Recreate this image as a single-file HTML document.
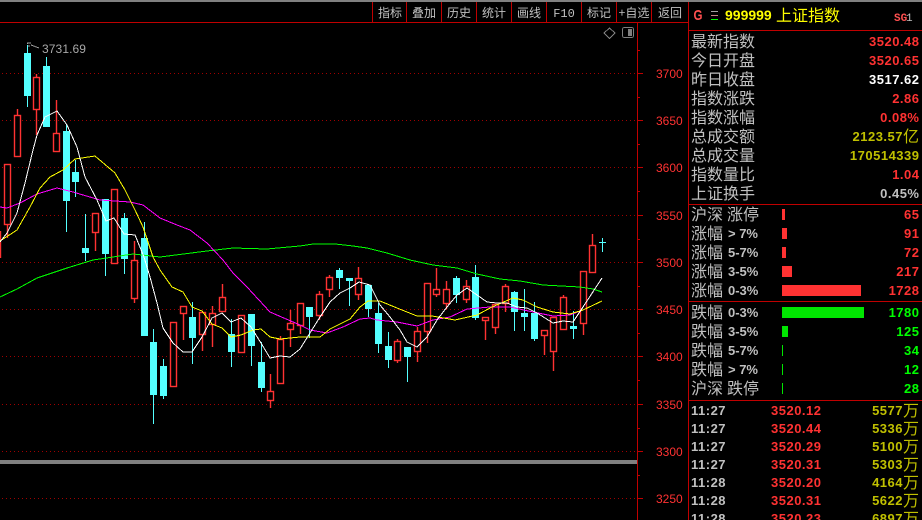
<!DOCTYPE html>
<html><head><meta charset="utf-8"><style>
html,body{margin:0;padding:0;background:#000;width:922px;height:520px;overflow:hidden}
svg{display:block}
text{white-space:pre}
.c{font-family:"WenQuanYi Zen Hei","Noto Sans CJK SC",sans-serif;font-size:16px;fill:#c0c0c0}
.t{font-family:"WenQuanYi Zen Hei","Noto Sans CJK SC",sans-serif;font-size:12px;fill:#c0c0c0;text-anchor:middle}
.n{font-family:"Liberation Sans",sans-serif;font-weight:bold;font-size:13px;letter-spacing:.5px;text-anchor:end}
.l{font-family:"Liberation Sans",sans-serif;font-weight:bold;font-size:13px;fill:#c0c0c0}
.a{font-family:"Liberation Sans",sans-serif;font-size:12px;fill:#ff3232}
.r{fill:#ff3232}.w{fill:#fff}.y{fill:#c0c000}.g{fill:#00ff00}.s{fill:#c0c0c0}
</style></head><body>
<svg width="922" height="520" viewBox="0 0 922 520" xmlns="http://www.w3.org/2000/svg">
<rect width="922" height="520" fill="#000"/>
<g shape-rendering="crispEdges">
<rect x="0" y="0" width="922" height="2" fill="#808080"/>
<path d="M0 22.5H689M372.5 2V22M406.5 2V22M441.5 2V22M476.5 2V22M511.5 2V22M546.5 2V22M581.5 2V22M616.5 2V22M651.5 2V22M637.5 22V520M688.5 2V520M689 30.5H922M689 204.5H922M689 301.5H922M689 400.5H922" stroke="#c00000" fill="none"/>
<path d="M2 73.5H637M2 120.5H637M2 167.5H637M2 215.5H637M2 262.5H637M2 309.5H637M2 356.5H637M2 404.5H637M2 451.5H637M2 498.5H637" stroke="#a00000" stroke-dasharray="1 3" fill="none"/>
<path d="M638 73.5h5M638 120.5h5M638 167.5h5M638 215.5h5M638 262.5h5M638 309.5h5M638 356.5h5M638 404.5h5M638 451.5h5M638 498.5h5M638 50.5h2M638 97.5h2M638 144.5h2M638 191.5h2M638 239.5h2M638 286.5h2M638 333.5h2M638 380.5h2M638 428.5h2M638 475.5h2" stroke="#c00000" fill="none"/>
<rect x="0" y="460" width="637" height="4" fill="#808080"/>
<!-- red candles -->
<g stroke="#ff3232" fill="#000" stroke-width="1.4" shape-rendering="geometricPrecision">
<path fill="none" d="M0.5 231V258M7.5 224V238M17.5 109V115M36.5 74V77M36.5 109V135M56.5 100V133M95.5 232V251M134.5 241V260M134.5 298V303M183.5 313V340M202.5 334V351M212.5 306V313M212.5 324V347M222.5 284V297M270.5 374V391M270.5 400V408M280.5 336V339M290.5 310V323M290.5 329V347M300.5 325V334M319.5 291V294M319.5 315V320M329.5 275V277M329.5 289V297M358.5 267V278M358.5 294V300M397.5 339V341M397.5 360V363M417.5 327V331M417.5 351V362M427.5 331V343M436.5 268V289M436.5 294V297M446.5 281V289M446.5 303V309M466.5 280V286M466.5 299V303M485.5 320V340M495.5 327V334M505.5 284V286M505.5 303V312M544.5 335V355M553.5 351V371M563.5 295V297M583.5 323V335M592.5 234V245"/>
<rect x="4.5" y="164.5" width="6" height="60"/>
<rect x="14.5" y="115.5" width="6" height="41"/>
<rect x="33.5" y="77.5" width="6" height="32"/>
<rect x="53.5" y="133.5" width="6" height="18"/>
<rect x="92.5" y="213.5" width="6" height="19"/>
<rect x="111.5" y="189.5" width="6" height="74"/>
<rect x="131.5" y="260.5" width="6" height="38"/>
<rect x="170.5" y="322.5" width="6" height="64"/>
<rect x="180.5" y="306.5" width="6" height="7"/>
<rect x="199.5" y="312.5" width="6" height="22"/>
<rect x="209.5" y="313.5" width="6" height="11"/>
<rect x="219.5" y="297.5" width="6" height="14"/>
<rect x="238.5" y="315.5" width="6" height="37"/>
<rect x="267.5" y="391.5" width="6" height="9"/>
<rect x="277.5" y="339.5" width="6" height="44"/>
<rect x="287.5" y="323.5" width="6" height="6"/>
<rect x="297.5" y="303.5" width="6" height="22"/>
<rect x="316.5" y="294.5" width="6" height="21"/>
<rect x="326.5" y="277.5" width="6" height="12"/>
<rect x="355.5" y="278.5" width="6" height="16"/>
<rect x="394.5" y="341.5" width="6" height="19"/>
<rect x="414.5" y="331.5" width="6" height="20"/>
<rect x="424.5" y="283.5" width="6" height="48"/>
<rect x="433.5" y="289.5" width="6" height="5"/>
<rect x="443.5" y="289.5" width="6" height="14"/>
<rect x="463.5" y="286.5" width="6" height="13"/>
<rect x="482.5" y="317.5" width="6" height="3"/>
<rect x="492.5" y="304.5" width="6" height="23"/>
<rect x="502.5" y="286.5" width="6" height="17"/>
<rect x="541.5" y="330.5" width="6" height="5"/>
<rect x="550.5" y="317.5" width="6" height="34"/>
<rect x="560.5" y="297.5" width="6" height="32"/>
<rect x="580.5" y="271.5" width="6" height="52"/>
<rect x="589.5" y="245.5" width="6" height="27"/>
</g>
<!-- cyan candles -->
<g shape-rendering="crispEdges">
<path stroke="#54ffff" fill="none" d="M27.5 45V107M46.5 57V127M66.5 124V232M75.5 160V197M85.5 214V261M105.5 199V276M124.5 213V274M144.5 222V336M153.5 329V424M163.5 359V399M192.5 302V364M231.5 319V367M251.5 314V366M261.5 342V392M309.5 307V338M339.5 268V289M349.5 278V306M368.5 285V317M378.5 303V353M388.5 332V368M407.5 347V382M456.5 276V303M475.5 265V320M514.5 291V331M524.5 289V331M534.5 302V341M573.5 311V339M602.5 238V252M599 242.5H606"/>
<path fill="#54ffff" d="M24 53h7v43h-7zM43 66h7v61h-7zM63 131h7v70h-7zM72 172h7v10h-7zM82 248h7v5h-7zM102 199h7v55h-7zM121 218h7v41h-7zM141 238h7v98h-7zM150 342h7v53h-7zM160 366h7v30h-7zM189 317h7v21h-7zM228 334h7v18h-7zM248 314h7v32h-7zM258 362h7v26h-7zM306 307h7v10h-7zM336 270h7v8h-7zM346 278h7v3h-7zM365 285h7v24h-7zM375 313h7v31h-7zM385 346h7v14h-7zM404 347h7v10h-7zM453 278h7v17h-7zM472 277h7v41h-7zM511 292h7v20h-7zM521 313h7v4h-7zM531 313h7v26h-7zM570 326h7v3h-7z"/>
</g>
<!-- moving averages -->
<g fill="none" stroke-width="1" stroke-linejoin="round" shape-rendering="crispEdges">
<polyline stroke="#00ff00" points="0,297 17,289 37,278 67,268 93,260 133,254 160,257 207,251 233,248 267,249 300,246 313,244 335,244 353,246 367,248 387,253 410,260 433,265 457,268 477,274 500,279 520,281 543,285 580,287 593,289 602,292"/>
<polyline stroke="#ff00ff" points="0,207 7,208 20,203 37,194 57,188 73,192 100,200 130,202 143,205 160,218 177,225 190,230 207,243 223,260 233,273 247,287 270,312 300,325 310,330 327,333 343,327 360,319 370,318 377,320 397,322 417,326 433,320 450,317 467,309 490,307 510,307 533,312 553,316 570,315 583,310 602,301"/>
<polyline stroke="#ffff00" points="0,241 17,230 30,207 40,188 50,177 63,170 75,159 95,156 115,173 125,190 135,210 143,227 153,257 160,270 172,287 183,292 192,307 202,311 212,324 222,328 231,337 241,335 253,330 261,329 270,337 280,339 300,337 320,337 330,329 350,319 360,307 368,301 380,301 397,308 417,316 432,316 455,320 477,315 492,307 513,298 523,300 537,307 553,312 570,314 583,310 602,301"/>
<polyline stroke="#ffffff" points="0,242 7,233 17,213 25,183 33,150 37,135 45,117 57,111 67,125 77,147 85,177 97,200 106,221 114,218 124,234 135,235 144,257 150,277 157,303 163,328 173,343 183,352 192,352 202,337 212,318 222,313 231,322 241,318 251,327 261,343 270,358 280,356 290,357 300,349 310,333 320,317 330,302 340,293 350,288 359,282 370,285 380,305 390,317 400,330 407,342 417,347 427,337 437,320 447,307 457,295 467,288 477,295 487,302 497,303 507,303 517,307 527,308 537,313 553,323 563,321 573,322 583,307 602,278"/>
</g>
<!-- hi label -->
<path d="M27.5 44V43H31M28 46H30M31 45L39 48" stroke="#a0a0a0" fill="none"/>
<text x="42" y="53" style="font-family:'Liberation Sans',sans-serif;font-size:12px;fill:#a8a8a8;letter-spacing:.1px">3731.69</text>
<!-- top icons -->
<path d="M609.5 28L615 33L609.5 38.5L604 33Z" stroke="#808080" fill="none"/>
<rect x="622.5" y="27.5" width="11" height="10" rx="2" stroke="#808080" fill="#000"/>
<rect x="628" y="29" width="4" height="7" fill="#808080"/>
<!-- axis labels -->
<text class="a" x="656" y="78">3700</text>
<text class="a" x="656" y="125">3650</text>
<text class="a" x="656" y="172">3600</text>
<text class="a" x="656" y="220">3550</text>
<text class="a" x="656" y="267">3500</text>
<text class="a" x="656" y="314">3450</text>
<text class="a" x="656" y="361">3400</text>
<text class="a" x="656" y="409">3350</text>
<text class="a" x="656" y="456">3300</text>
<text class="a" x="656" y="503">3250</text>
<!-- toolbar -->
<text class="t" x="390" y="17">指标</text>
<text class="t" x="424" y="17">叠加</text>
<text class="t" x="459" y="17">历史</text>
<text class="t" x="494" y="17">统计</text>
<text class="t" x="529" y="17">画线</text>
<text class="t" x="564" y="17" style="font-family:'Liberation Mono',monospace">F10</text>
<text class="t" x="599" y="17">标记</text>
<text class="t" x="634" y="17">+自选</text>
<text class="t" x="670" y="17">返回</text>
<!-- header -->
<text x="693.5" y="20" textLength="9" lengthAdjust="spacingAndGlyphs" style="font-family:'Liberation Sans',sans-serif;font-weight:bold;font-size:15px;fill:#ff5050">G</text>
<g shape-rendering="crispEdges"><rect x="711" y="11" width="7" height="1" fill="#a0a0a0"/><rect x="711" y="15" width="7" height="1" fill="#c08080"/><rect x="711" y="19" width="7" height="1" fill="#00ff00"/></g>
<text x="725" y="20" style="font-family:'Liberation Sans',sans-serif;font-weight:bold;font-size:14px;fill:#ffff00">999999</text>
<text x="776" y="21" style="font-family:'WenQuanYi Zen Hei','Noto Sans CJK SC',sans-serif;font-size:16px;fill:#ffff00">上证指数</text>
<text x="894" y="21" style="font-family:'Liberation Mono',monospace;font-weight:bold;font-size:11px;fill:#ff5050">SG</text>
<text x="906" y="21" style="font-family:'Liberation Mono',monospace;font-size:11px;fill:#c0c0c0">1</text>
<!-- quote rows -->
<text class="c" x="691" y="47">最新指数</text><text class="n r" x="919.5" y="46">3520.48</text>
<text class="c" x="691" y="66">今日开盘</text><text class="n r" x="919.5" y="65">3520.65</text>
<text class="c" x="691" y="85">昨日收盘</text><text class="n w" x="919.5" y="84">3517.62</text>
<text class="c" x="691" y="104">指数涨跌</text><text class="n r" x="919.5" y="103">2.86</text>
<text class="c" x="691" y="123">指数涨幅</text><text class="n r" x="919.5" y="122">0.08%</text>
<text class="c" x="691" y="142">总成交额</text><text class="n y" x="903" y="141">2123.57</text><text class="c" x="903" y="142" style="fill:#c0c000">亿</text>
<text class="c" x="691" y="161">总成交量</text><text class="n y" x="919.5" y="160">170514339</text>
<text class="c" x="691" y="180">指数量比</text><text class="n r" x="919.5" y="179">1.04</text>
<text class="c" x="691" y="199">上证换手</text><text class="n s" x="919.5" y="198">0.45%</text>
<!-- breadth -->
<text class="c" x="691" y="220">沪深</text><text class="c" x="727" y="220">涨停</text><text class="n r" x="919.5" y="219">65</text>
<text class="c" x="691" y="239">涨幅</text><text class="l" x="728" y="238">&gt; 7%</text><text class="n r" x="919.5" y="238">91</text>
<text class="c" x="691" y="258">涨幅</text><text class="l" x="728" y="257">5-7%</text><text class="n r" x="919.5" y="257">72</text>
<text class="c" x="691" y="277">涨幅</text><text class="l" x="728" y="276">3-5%</text><text class="n r" x="919.5" y="276">217</text>
<text class="c" x="691" y="296">涨幅</text><text class="l" x="728" y="295">0-3%</text><text class="n r" x="919.5" y="295">1728</text>
<text class="c" x="691" y="318">跌幅</text><text class="l" x="728" y="317">0-3%</text><text class="n g" x="919.5" y="317">1780</text>
<text class="c" x="691" y="337">跌幅</text><text class="l" x="728" y="336">3-5%</text><text class="n g" x="919.5" y="336">125</text>
<text class="c" x="691" y="356">跌幅</text><text class="l" x="728" y="355">5-7%</text><text class="n g" x="919.5" y="355">34</text>
<text class="c" x="691" y="375">跌幅</text><text class="l" x="728" y="374">&gt; 7%</text><text class="n g" x="919.5" y="374">12</text>
<text class="c" x="691" y="394">沪深</text><text class="c" x="727" y="394">跌停</text><text class="n g" x="919.5" y="393">28</text>
<g shape-rendering="crispEdges">
<rect x="782" y="209" width="3" height="11" fill="#ff3232"/>
<rect x="782" y="228" width="5" height="11" fill="#ff3232"/>
<rect x="782" y="247" width="4" height="11" fill="#ff3232"/>
<rect x="782" y="266" width="10" height="11" fill="#ff3232"/>
<rect x="782" y="285" width="79" height="11" fill="#ff3232"/>
<rect x="782" y="307" width="82" height="11" fill="#00e600"/>
<rect x="782" y="326" width="6" height="11" fill="#00e600"/>
<rect x="782" y="345" width="1" height="11" fill="#00e600"/>
<rect x="782" y="364" width="1" height="11" fill="#00e600"/>
<rect x="782" y="383" width="1" height="11" fill="#00e600"/>
</g>
<!-- ticks -->
<g>
<text class="l" x="691" y="415" style="letter-spacing:.5px">11:27</text><text class="n r" x="821.5" y="415">3520.12</text><text class="n y" x="903" y="415">5577</text><text class="c" x="903" y="416" style="fill:#c0c000">万</text>
<text class="l" x="691" y="433" style="letter-spacing:.5px">11:27</text><text class="n r" x="821.5" y="433">3520.44</text><text class="n y" x="903" y="433">5336</text><text class="c" x="903" y="434" style="fill:#c0c000">万</text>
<text class="l" x="691" y="451" style="letter-spacing:.5px">11:27</text><text class="n r" x="821.5" y="451">3520.29</text><text class="n y" x="903" y="451">5100</text><text class="c" x="903" y="452" style="fill:#c0c000">万</text>
<text class="l" x="691" y="469" style="letter-spacing:.5px">11:27</text><text class="n r" x="821.5" y="469">3520.31</text><text class="n y" x="903" y="469">5303</text><text class="c" x="903" y="470" style="fill:#c0c000">万</text>
<text class="l" x="691" y="487" style="letter-spacing:.5px">11:28</text><text class="n r" x="821.5" y="487">3520.20</text><text class="n y" x="903" y="487">4164</text><text class="c" x="903" y="488" style="fill:#c0c000">万</text>
<text class="l" x="691" y="505" style="letter-spacing:.5px">11:28</text><text class="n r" x="821.5" y="505">3520.31</text><text class="n y" x="903" y="505">5622</text><text class="c" x="903" y="506" style="fill:#c0c000">万</text>
<text class="l" x="691" y="523" style="letter-spacing:.5px">11:28</text><text class="n r" x="821.5" y="523">3520.23</text><text class="n y" x="903" y="523">6897</text><text class="c" x="903" y="524" style="fill:#c0c000">万</text>
</g>
</svg>
</body></html>
